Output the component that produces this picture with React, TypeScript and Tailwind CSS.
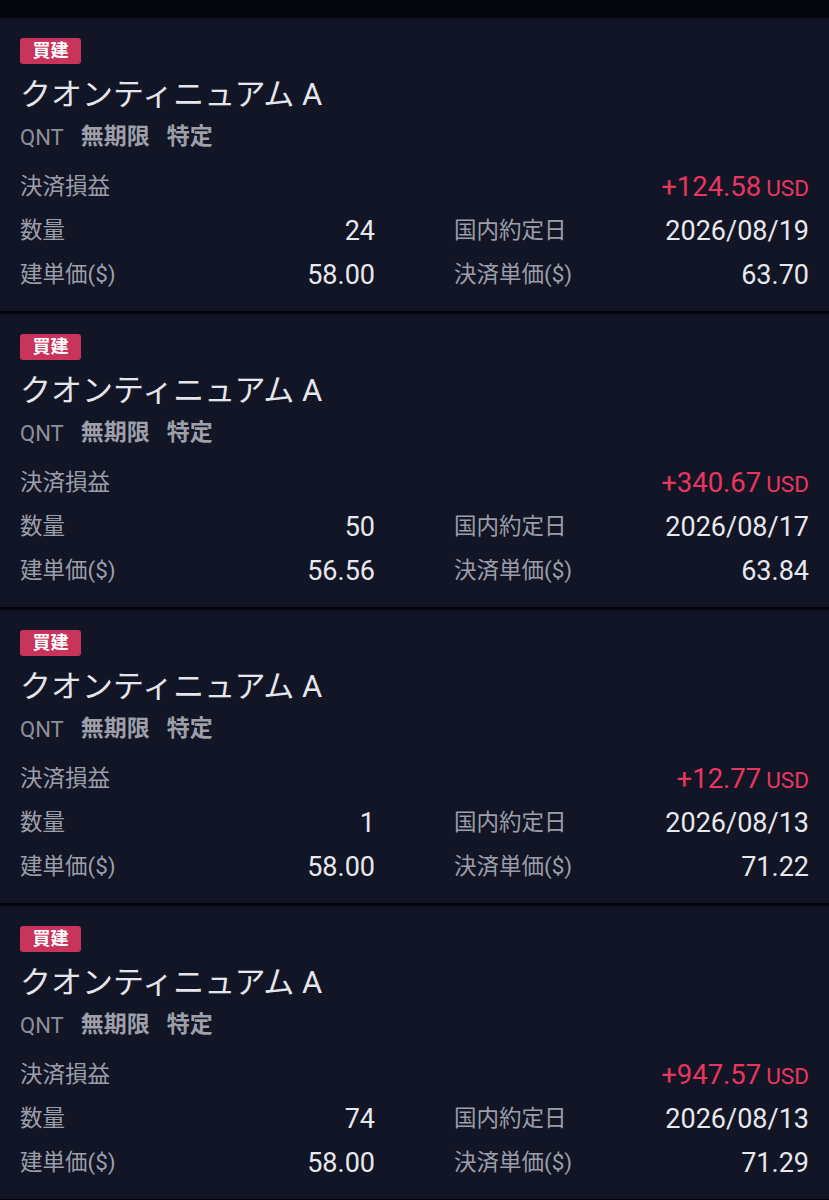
const font = "font-['Roboto','Noto_Sans_CJK_JP',sans-serif]";

type Trade = {
  pnl: string;
  qty: string;
  date: string;
  open: string;
  close: string;
};

const trades: Trade[] = [
  { pnl: '+124.58', qty: '24', date: '2026/08/19', open: '58.00', close: '63.70' },
  { pnl: '+340.67', qty: '50', date: '2026/08/17', open: '56.56', close: '63.84' },
  { pnl: '+12.77', qty: '1', date: '2026/08/13', open: '58.00', close: '71.22' },
  { pnl: '+947.57', qty: '74', date: '2026/08/13', open: '58.00', close: '71.29' },
];

function Cell({ label, value }: { label: string; value: string }) {
  return (
    <div className="flex h-[44px] items-center justify-between">
      <span className="text-[22.5px] text-[#9c9ea9]">{label}</span>
      <span className="text-[27px] text-[#e7e8ed]">{value}</span>
    </div>
  );
}

function TradeCard({ t }: { t: Trade }) {
  return (
    <div className="bg-[#121526] px-[20px] pt-[20px] pb-[14px]">
      {/* 種別バッジ */}
      <div className="flex h-[26px] w-[61px] items-center justify-center rounded-[3px] bg-[#c9345c] text-[18px] font-bold leading-none text-white">
        買建
      </div>
      <div className="mt-[9px] flex h-[44px] items-center text-[31px] text-[#e5e6eb]">
        クオンティニュアム A
      </div>
      <div className="flex h-[40px] items-center gap-[17px]">
        <span className="text-[22px] text-[#8d8f9b]">QNT</span>
        <span className="text-[23px] font-bold text-[#9d9fa9]">無期限</span>
        <span className="text-[23px] font-bold text-[#9d9fa9]">特定</span>
      </div>
      <div className="mt-[8px] flex h-[44px] items-center justify-between">
        <span className="text-[22.5px] text-[#9c9ea9]">決済損益</span>
        <span className="flex items-baseline gap-[5px] text-[#e8365e]">
          <span className="text-[27.5px]">{t.pnl}</span>
          <span className="text-[22.5px]">USD</span>
        </span>
      </div>
      <div className="grid grid-cols-2 gap-x-[79px]">
        <Cell label="数量" value={t.qty} />
        <Cell label="国内約定日" value={t.date} />
        <Cell label="建単価($)" value={t.open} />
        <Cell label="決済単価($)" value={t.close} />
      </div>
    </div>
  );
}

export default function App() {
  return (
    <div className={`${font} min-h-[1200px] w-[829px] bg-[#05070f] pt-[18px]`}>
      <div className="flex flex-col gap-[3px]">
        {trades.map((t, i) => (
          <TradeCard key={i} t={t} />
        ))}
      </div>
    </div>
  );
}
